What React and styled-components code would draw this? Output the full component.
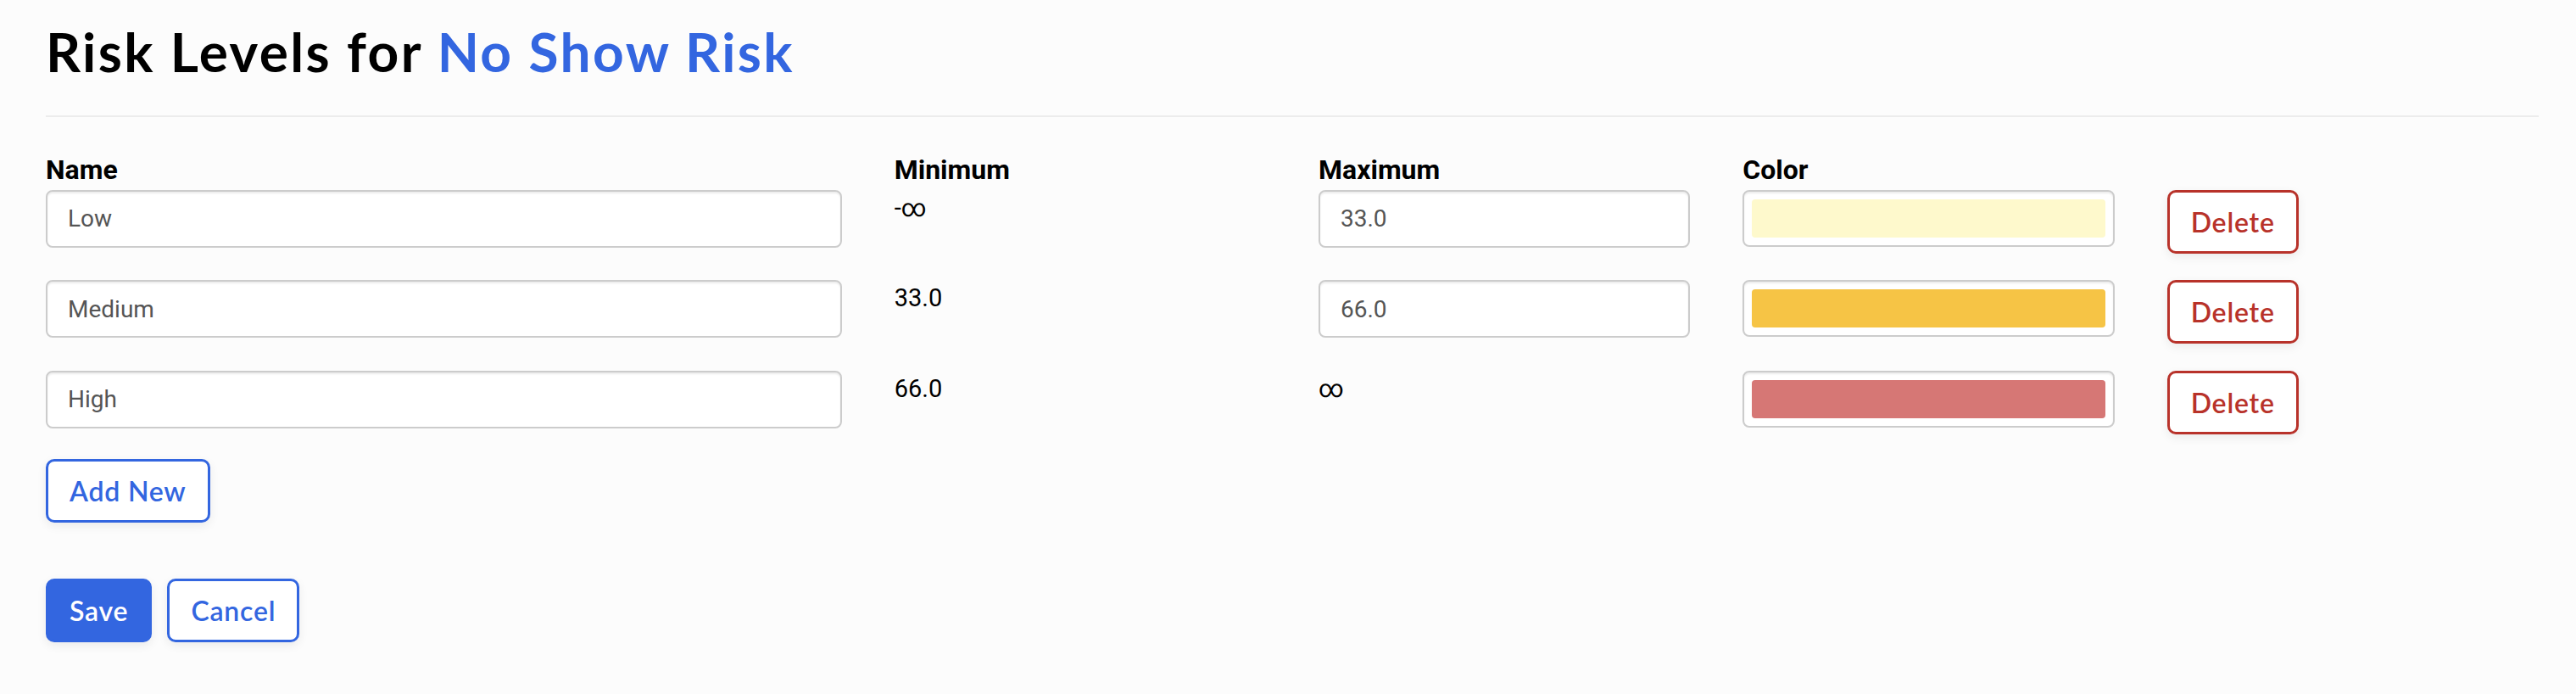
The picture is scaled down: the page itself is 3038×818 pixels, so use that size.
import styled, { createGlobalStyle } from 'styled-components';

const GlobalStyle = createGlobalStyle`
  html, body {
    margin: 0;
    background: #fcfcfc;
    font-family: Roboto, "Liberation Sans", sans-serif;
  }
`;

const BLUE = '#3366e0';
const RED = '#b8322a';

const Page = styled.div`
  padding: 23px 44px 60px 54px;
`;

const Title = styled.h1`
  margin: 0;
  font-family: Lato, "Open Sans", sans-serif;
  font-size: 64px;
  font-weight: 700;
  line-height: 1.2;
  letter-spacing: 2.4px;
  color: #000;

  span {
    color: ${BLUE};
  }
`;

const Divider = styled.hr`
  border: none;
  height: 2px;
  background: #ececec;
  margin: 36px 0 38px;
`;

const Grid = styled.div`
  display: grid;
  grid-template-columns: repeat(6, minmax(0, 1fr));
  column-gap: 62px;
  align-items: start;
`;

const Label = styled.div`
  grid-column: span ${(p) => p.$span || 1};
  font-size: 32px;
  font-weight: 700;
  line-height: 48px;
  color: #000;
`;

const Rows = styled.div`
  display: flex;
  flex-direction: column;
  gap: 31.5px;
`;

const Cell = styled.div`
  grid-column: span ${(p) => p.$span || 1};
`;

const TextInput = styled.input`
  box-sizing: border-box;
  width: 100%;
  height: 68px;
  padding: 0 24px;
  border: 2px solid #ccc;
  border-radius: 8px;
  background: #fff;
  box-shadow: inset 0 2px 2px rgba(0, 0, 0, 0.075);
  font-family: Roboto, sans-serif;
  font-size: 28px;
  color: #555;
  outline: none;
`;

const Value = styled.div`
  font-size: 29px;
  line-height: 42px;
  color: #000;
`;

const ColorBox = styled.div`
  box-sizing: border-box;
  height: 67px;
  padding: 9px;
  border: 2px solid #ccc;
  border-radius: 8px;
  background: #fff;
  box-shadow: inset 0 2px 2px rgba(0, 0, 0, 0.075);
`;

const Swatch = styled.div`
  height: 100%;
  border-radius: 4px;
  background: ${(p) => p.$color};
`;

const Button = styled.button`
  box-sizing: border-box;
  height: 75px;
  padding: 0 25px;
  display: inline-flex;
  align-items: center;
  justify-content: center;
  border: 3px solid ${(p) => p.$tone};
  border-radius: 10px;
  background: ${(p) => (p.$filled ? p.$tone : '#fff')};
  color: ${(p) => (p.$filled ? '#fff' : p.$tone)};
  font-family: Lato, "Open Sans", sans-serif;
  font-size: 32px;
  font-weight: 600;
  letter-spacing: 0.8px;
  box-shadow: 0 4px 12px rgba(0, 0, 0, 0.07);
  cursor: pointer;
`;

const AddRow = styled.div`
  margin-top: 29px;
`;

const Actions = styled.div`
  display: flex;
  gap: 18px;
  margin-top: 66px;
`;

const levels = [
  { name: 'Low', min: '-∞', max: '33.0', color: '#fef9cc' },
  { name: 'Medium', min: '33.0', max: '66.0', color: '#f6c445' },
  { name: 'High', min: '66.0', max: null, color: '#d67775' },
];

export default function App() {
  return (
    <Page>
      <GlobalStyle />
      <Title>
        Risk Levels for <span>No Show Risk</span>
      </Title>
      <Divider />

      <Grid>
        <Label $span={2}>Name</Label>
        <Label>Minimum</Label>
        <Label>Maximum</Label>
        <Label>Color</Label>
      </Grid>

      <Rows>
        {levels.map((level) => (
          <Grid key={level.name}>
            <Cell $span={2}>
              <TextInput defaultValue={level.name} />
            </Cell>
            <Cell>
              <Value>{level.min}</Value>
            </Cell>
            <Cell>
              {level.max ? <TextInput defaultValue={level.max} /> : <Value>∞</Value>}
            </Cell>
            <Cell>
              <ColorBox>
                <Swatch $color={level.color} />
              </ColorBox>
            </Cell>
            <Cell>
              <Button $tone={RED}>Delete</Button>
            </Cell>
          </Grid>
        ))}
      </Rows>

      <AddRow>
        <Button $tone={BLUE}>Add New</Button>
      </AddRow>

      <Actions>
        <Button $tone={BLUE} $filled>Save</Button>
        <Button $tone={BLUE}>Cancel</Button>
      </Actions>
    </Page>
  );
}
